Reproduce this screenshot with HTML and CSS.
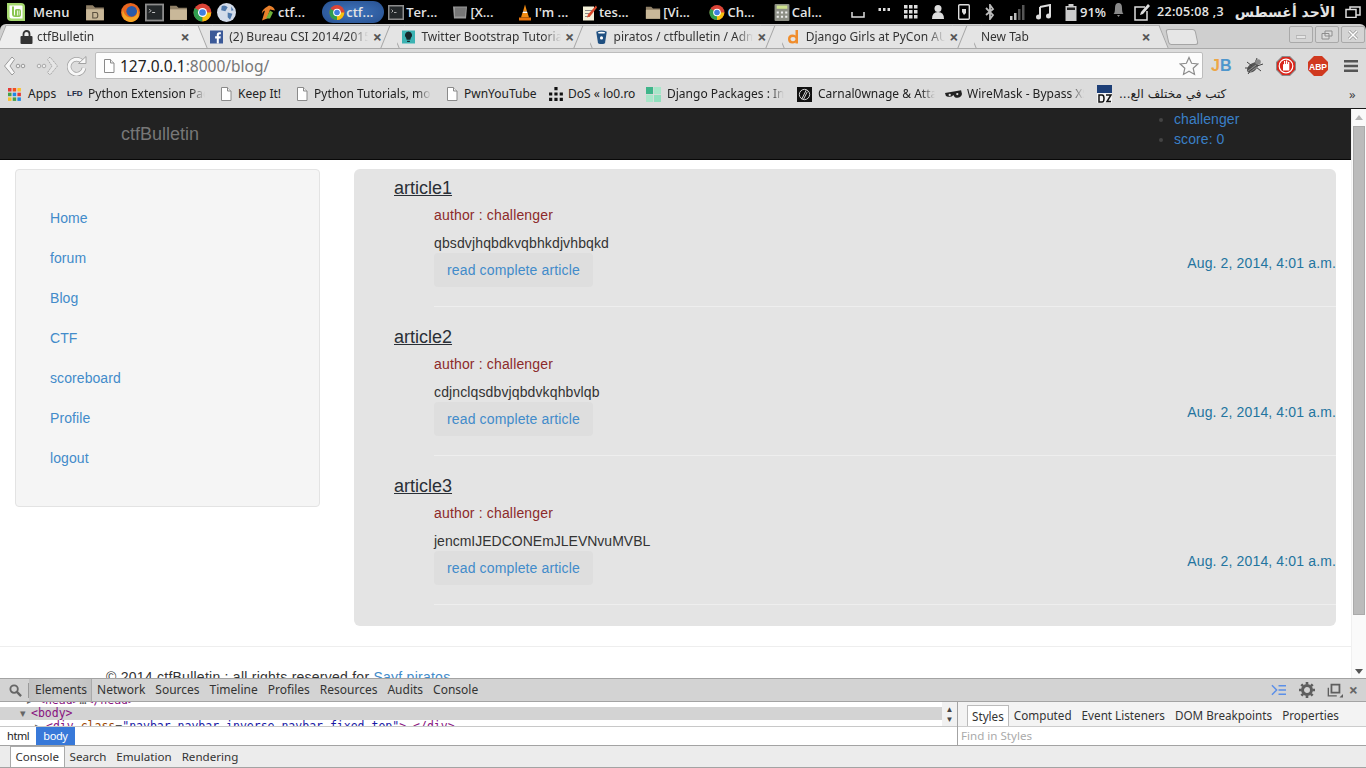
FILE: index.html
```html
<!DOCTYPE html>
<html lang="en">
<head>
<meta charset="utf-8">
<title>ctfBulletin</title>
<link rel="stylesheet" href="styles.css">
</head>
<body>
<svg class="defs" width="0" height="0">
  <defs>
    <symbol id="chrome" viewBox="0 0 16 16">
      <circle cx="8" cy="8" r="7.5" fill="#db4437"/>
      <path d="M8 8 1.500 4.200A7.500 7.500 0 0 0 8 15.500z" fill="#2f9e4f"/>
      <path d="M8 8h7.300A7.500 7.500 0 0 1 8 15.500z" fill="#f4c20d"/>
      <circle cx="8" cy="8" r="3.800" fill="#fff"/>
      <circle cx="8" cy="8" r="2.800" fill="#3f7fe0"/>
    </symbol>
    <symbol id="folder" viewBox="0 0 18 16">
      <path d="M1 1.500h6l2 2h8V15H1z" fill="#8f7f66"/>
      <path d="M1 5h16v10H1z" fill="#c9b899"/>
    </symbol>
    <symbol id="page" viewBox="0 0 12 14">
      <path d="M1.500.5h6l3.500 3.500v9.500H1.500z" fill="#fff" stroke="#8a8a8a"/>
      <path d="M7.500.5V4H11" fill="#eee" stroke="#8a8a8a"/>
    </symbol>
  </defs>
</svg>

<header class="panel">
  <div class="panel-start">
    <svg class="i-mint" viewBox="0 0 20 20"><path d="M1 1h14q4 0 4 4v14H5q-4 0-4-4z" fill="#a5d86f"/><path d="M3.500 3.500h12q1 0 1 1v12h-11q-2 0-2-2z" fill="#fff"/><path d="M6 4.500h2V12q0 1.500 1 1.500V8.500q0-1.500 1.500-1.500H13q2 0 2 2v4q0 2-3 2H9q-3 0-3-3zM11 8.500v5h.8V8.500zM12.800 8.500v5q.7 0 .7-1.500V8.500z" fill="#8cc653"/></svg>
    <span class="menu-label">Menu</span>
  </div>
  <div class="launchers">
    <svg class="lic lic-first" viewBox="0 0 18 16"><use href="#folder"/><path d="M7 8h3q1.500 0 1.500 2.500T10 13H7z" fill="none" stroke="#5c5140"/></svg>
    <svg class="lic" viewBox="0 0 16 16"><circle cx="8" cy="8" r="8" fill="#e8651f"/><circle cx="9" cy="7" r="4.500" fill="#2a5aa8"/><path d="M1.500 5q1 5 4 6.500 4 1.500 7-1 2-2 .5-6 3 4 1.500 8-3 4-7 3.500-6-1-6.500-6.500z" fill="#f4a524"/></svg>
    <svg class="lic" viewBox="0 0 16 16"><rect y=".5" width="16" height="15" fill="#8d8d8d"/><rect x="1.500" y="2" width="13" height="12" fill="#24282a"/><path d="M3.500 5l1.500 1.500L3.500 8M6 8h2.500" stroke="#ccc" fill="none" stroke-width=".8"/></svg>
    <svg class="lic" viewBox="0 0 18 16"><use href="#folder"/></svg>
    <svg class="lic"><use href="#chrome"/></svg>
    <svg class="lic" viewBox="0 0 16 16"><circle cx="8" cy="8" r="8" fill="#d3dcea"/><path d="M4 2.500q3-1 5 1L7 7 3.500 6zM9 8l4 1-2 5-2-2zM12 3l2 3-2 .5z" fill="#4f79ac"/></svg>
  </div>
  <div class="windows">
    <div class="win"><svg class="wic" viewBox="0 0 16 16"><path d="M9 1q5 1 6 5l-5-1-3 9-5 2 3-10q-3 1-3 4Q0 6 9 1z" fill="#e9802b"/><path d="M10 6l3 2-3 6H6z" fill="#6fb13a"/></svg><span>ctf...</span></div>
    <div class="win win-on"><svg class="wic"><use href="#chrome"/></svg><span>ctf...</span></div>
    <div class="win"><svg class="wic" viewBox="0 0 16 16"><rect y=".5" width="16" height="15" fill="#8d8d8d"/><rect x="1.500" y="2" width="13" height="12" fill="#24282a"/><path d="M3.500 5l1.500 1.500L3.500 8M6 8h2.500" stroke="#ccc" fill="none" stroke-width=".8"/></svg><span>Ter...</span></div>
    <div class="win"><svg class="wic" viewBox="0 0 16 16"><path d="M1 2h14l-1 12H2z" fill="#9a9a9a"/><path d="M3 3h11l-1 9H3z" fill="#777"/></svg><span>[X...</span></div>
    <div class="win"><svg class="wic" viewBox="0 0 16 16"><path d="M8 0l2 7H6zM5.500 8h5l1.500 5H4z" fill="#f08a12"/><path d="M6 7h4l.4 1.500H5.600z" fill="#fff"/><rect x="2" y="13" width="12" height="3" fill="#e8750d"/></svg><span>I'm ...</span></div>
    <div class="win"><svg class="wic" viewBox="0 0 16 16"><path d="M2 2h11v14H2z" fill="#f4f0d8"/><path d="M4 6h7M4 9h7M4 12h5" stroke="#888"/><path d="M15 1l1 2-7 9-3 1 1-3z" fill="#d9482b"/></svg><span>tes...</span></div>
    <div class="win"><svg class="wic" viewBox="0 0 18 16"><use href="#folder"/></svg><span>[Vi...</span></div>
    <div class="win"><svg class="wic"><use href="#chrome"/></svg><span>Ch...</span></div>
    <div class="win"><svg class="wic" viewBox="0 0 14 16"><rect width="14" height="16" rx="1" fill="#8e9086"/><rect x="2" y="1.500" width="10" height="3" fill="#cfe38f"/><path d="M2 7h2v2H2zM6 7h2v2H6zM10 7h2v2h-2zM2 11h2v2H2zM6 11h2v2H6zM10 11h2v2h-2z" fill="#eee"/></svg><span>Cal...</span></div>
  </div>
  <div class="tray">
    <svg class="t-kb" viewBox="0 0 14 8"><path d="M1 1v5h12V1" fill="none" stroke="#ddd" stroke-width="1.500"/></svg>
    <svg class="t-dots" viewBox="0 0 12 4"><path d="M0 0h2.500v3H0zM4.500 0H7v3H4.500zM9 0h2.500v3H9z" fill="#ddd"/></svg>
    <svg class="t-grid" viewBox="0 0 14 14"><path d="M0 0h3.500v3.500H0zM5 0h3.500v3.500H5zM10 0h3.500v3.500H10zM0 5h3.500v3.500H0zM5 5h3.500v3.500H5zM10 5h3.500v3.500H10zM0 10h3.500v3.500H0zM5 10h3.500v3.500H5zM10 10h3.500v3.500H10z" fill="#ddd"/></svg>
    <svg class="t-user" viewBox="0 0 12 14"><circle cx="6" cy="3.500" r="3.500" fill="#ddd"/><path d="M0 14q0-7 6-7t6 7z" fill="#ddd"/></svg>
    <svg class="t-phone" viewBox="0 0 12 16"><rect x=".7" y=".7" width="10.600" height="14.600" rx="1" fill="none" stroke="#ddd" stroke-width="1.400"/><path d="M4 5h4v4l-2 2-2-3z" fill="#ddd"/></svg>
    <svg class="t-bt" viewBox="0 0 10 16"><path d="M1 4l7 7-3 4V1l3 4-7 6" fill="none" stroke="#bbb" stroke-width="1.800"/></svg>
    <svg class="t-sig" viewBox="0 0 15 15"><path d="M0 11h2.500v4H0z" fill="#ccc"/><path d="M4 8h2.500v7H4z" fill="#bbb"/><path d="M8 4h2.500v11H8zM12 0h2.500v15H12z" fill="#555"/></svg>
    <svg class="t-music" viewBox="0 0 16 16"><path d="M4 3l10-2v11" fill="none" stroke="#ddd" stroke-width="2"/><path d="M4 3v10" stroke="#ddd" stroke-width="2"/><circle cx="2.500" cy="13" r="2.500" fill="#ddd"/><circle cx="12.500" cy="12" r="2.500" fill="#ddd"/></svg>
    <svg class="t-bat" viewBox="0 0 11 17"><path d="M3 0h5v2h3v15H0V2h3z" fill="#ccc"/><path d="M1.500 3.500h8V6h-8z" fill="#222"/></svg>
    <span class="t-pct">91%</span>
    <svg class="t-bell" viewBox="0 0 10 14"><path d="M5 0q3.500 0 3.500 5t1.500 6H0q1.500-1 1.500-6T5 0zM3.500 12h3L5 14z" fill="#8a8a8a"/></svg>
    <svg class="t-note" viewBox="0 0 18 17"><path d="M12 3H2v13h12V7" fill="none" stroke="#ddd" stroke-width="1.500"/><path d="M15 0l2 2-7 8-3 1 1-3z" fill="#ddd"/></svg>
    <span class="t-clock">22:05:08 ,3</span>
    <span class="t-date" dir="rtl" lang="ar">الأحد أغسطس</span>
    <svg class="t-win" viewBox="0 0 16 12"><path d="M5 1h10v8H5z" fill="none" stroke="#ddd" stroke-width="1.500"/><path d="M1 3.500h10v8H1z" fill="#000" stroke="#ddd" stroke-width="1.500"/></svg>
  </div>
</header>

<div class="tabstrip">
  <div class="tab tab-on"><svg class="fav" viewBox="0 0 12 14"><path d="M3 6V4a3 3 0 0 1 6 0v2" fill="none" stroke="#333" stroke-width="1.800"/><rect y="6" width="12" height="8" rx="1" fill="#333"/></svg><span class="tab-title">ctfBulletin</span><span class="tab-x">×</span></div>
  <div class="tab"><svg class="fav" viewBox="0 0 14 14"><rect width="14" height="14" fill="#3b5998"/><path d="M9.500 14V8.500h1.800l.3-2.200H9.500V5q0-1 1-1h1.200V2H10Q7.300 2 7.300 4.700v1.600H5.500v2.200h1.800V14z" fill="#fff"/></svg><span class="tab-title">(2) Bureau CSI 2014/2015</span><span class="tab-x">×</span></div>
  <div class="tab"><svg class="fav" viewBox="0 0 14 14"><rect width="14" height="14" fill="#3cb3b3"/><path d="M7 1a4 4 0 0 1 2.500 7L9 10H5l-.5-2A4 4 0 0 1 7 1zM5.500 11h3v1.500h-3z" fill="#15282c"/></svg><span class="tab-title">Twitter Bootstrap Tutorial</span><span class="tab-x">×</span></div>
  <div class="tab"><svg class="fav" viewBox="0 0 14 16"><path d="M1 2q6-3 12 0l-2 13q-4 2-8 0z" fill="#205081"/><ellipse cx="7" cy="3" rx="4" ry="1" fill="#fff"/><circle cx="7" cy="9" r="1.800" fill="#fff"/></svg><span class="tab-title">piratos / ctfbulletin / Admin</span><span class="tab-x">×</span></div>
  <div class="tab"><svg class="fav" viewBox="0 0 12 14"><path d="M8 0h2.500v13.500H8v-1q-1 1-3 1-4.500 0-4.500-4.500T5 4.500q2 0 3 1zM5.500 7C3.800 7 3 7.800 3 9s.8 2.200 2.500 2.200S8 10.200 8 9 7.200 7 5.500 7z" fill="#f08d2c"/></svg><span class="tab-title">Django Girls at PyCon AU</span><span class="tab-x">×</span></div>
  <div class="tab tab-new"><span class="tab-title">New Tab</span><span class="tab-x">×</span></div>
  <div class="newtab"></div>
  <div class="winbtns">
    <span class="wb"><svg viewBox="0 0 12 10"><path d="M1 7h10" stroke="#999" stroke-width="3"/><path d="M1.500 7h9" stroke="#fff" stroke-width="1.500"/></svg></span>
    <span class="wb"><svg viewBox="0 0 12 10"><path d="M4 1h7v5H4zM1 3.500h7V9H1z" fill="#ddd" stroke="#8d8d8d"/></svg></span>
    <span class="wb"><svg viewBox="0 0 12 10"><path d="M2 1l8 8M10 1L2 9" stroke="#999" stroke-width="3"/><path d="M2 1l8 8M10 1L2 9" stroke="#fff" stroke-width="1.500"/></svg></span>
  </div>
</div>

<div class="toolbar">
  <div class="navbtns">
    <svg class="nb" viewBox="0 0 22 20"><path d="M8 1l2.500 2.500L6 10l4.500 6.500L8 19 .5 10z" fill="#f7f7f7" stroke="#9a9a9a"/><circle cx="14" cy="10" r="1.800" fill="#eee" stroke="#999"/><circle cx="19" cy="10" r="1.800" fill="#eee" stroke="#999"/></svg>
    <svg class="nb" viewBox="0 0 22 20"><path d="M14 1l-2.500 2.500L16 10l-4.500 6.500L14 19l7.500-9z" fill="#e6e6e6" stroke="#a5a5a5" stroke-dasharray="1.500 .7"/><circle cx="8" cy="10" r="1.800" fill="#eee" stroke="#aaa"/><circle cx="3" cy="10" r="1.800" fill="#eee" stroke="#aaa"/></svg>
    <svg class="nb nb-r" viewBox="0 0 20 20"><path d="M15.500 6A7.500 7.500 0 1 0 17 12" fill="none" stroke="#a2a2a2" stroke-width="4.500"/><path d="M15.500 6A7.500 7.500 0 1 0 17 12" fill="none" stroke="#f7f7f7" stroke-width="3"/><path d="M11.500 7.500h7.500V.5z" fill="#f7f7f7" stroke="#a2a2a2"/></svg>
  </div>
  <div class="omni">
    <svg class="omni-page" viewBox="0 0 12 14"><use href="#page"/></svg>
    <span class="url"><b>127.0.0.1</b>:8000/blog/</span>
    <svg class="star" viewBox="0 0 20 20"><path d="M10 1.500l2.600 5.800 6.200.7-4.600 4.200 1.300 6.200-5.500-3.200-5.500 3.200 1.300-6.200L1.200 8l6.200-.7z" fill="#fafafa" stroke="#8c8c8c" stroke-width="1.200"/></svg>
  </div>
  <div class="exts">
    <span class="jb"><i>J</i><u>B</u></span>
    <svg class="ext" viewBox="0 0 20 20"><ellipse cx="8.500" cy="11.500" rx="3.800" ry="6.500" transform="rotate(50 8.500 11.500)" fill="#555"/><path d="M3 6l5 4M1 12h6M4 18l4-5M13 2l-2 5M19 8l-6 2M17 15l-5-4" stroke="#444"/><circle cx="14" cy="6" r="2.800" fill="#888"/><path d="M4 15l8-6M6 16l7-5" stroke="#bbb" stroke-width=".6"/></svg>
    <svg class="ext" viewBox="0 0 20 20"><path d="M6 0h8l6 6v8l-6 6H6l-6-6V6z" fill="#8a8a8a"/><path d="M6.500 1h7L19 6.500v7L13.500 19h-7L1 13.500v-7z" fill="#d9261c"/><circle cx="10" cy="10" r="6.800" fill="none" stroke="#fff" stroke-width="1.200"/><path d="M7 14.500V8l1 .5V5l1.200 0v3h.8V4.500l1.300 0V8H12V6l1.300 0v8.500z" fill="#fff"/></svg>
    <svg class="ext" viewBox="0 0 20 20"><path d="M6 0h8l6 6v8l-6 6H6l-6-6V6z" fill="#d0391f"/><text x="10" y="13.500" class="abp">ABP</text></svg>
    <svg class="burger" viewBox="0 0 14 12"><path d="M0 0h14v2.500H0zM0 4.700h14v2.500H0zM0 9.500h14V12H0z" fill="#555"/></svg>
  </div>
</div>

<nav class="bookmarks">
  <div class="bm bm-apps"><svg class="bi" viewBox="0 0 13 13"><path d="M0 0h3.500v3.500H0z" fill="#e53935"/><path d="M4.700 0h3.500v3.500H4.700z" fill="#f4511e"/><path d="M9.400 0h3.500v3.500H9.400z" fill="#fbc02d"/><path d="M0 4.700h3.500v3.500H0z" fill="#43a047"/><path d="M4.700 4.700h3.500v3.500H4.700z" fill="#1e88e5"/><path d="M9.400 4.700h3.500v3.500H9.400z" fill="#e53935"/><path d="M0 9.400h3.500v3.500H0z" fill="#fbc02d"/><path d="M4.700 9.400h3.500v3.500H4.700z" fill="#43a047"/><path d="M9.400 9.400h3.500v3.500H9.400z" fill="#1e88e5"/></svg><span>Apps</span></div>
  <div class="bm bm-lfd"><span class="lfd">LFD</span><span class="bt bt-117">Python Extension Packages</span></div>
  <div class="bm bm-keep"><svg class="bi bi-p"><use href="#page"/></svg><span>Keep It!</span></div>
  <div class="bm bm-tut"><svg class="bi bi-p"><use href="#page"/></svg><span class="bt bt-117">Python Tutorials, more</span></div>
  <div class="bm bm-pwn"><svg class="bi bi-p"><use href="#page"/></svg><span>PwnYouTube</span></div>
  <div class="bm bm-dos"><svg class="bi bi-w" viewBox="0 0 16 14"><path d="M6 0h3v3H6zM1 5h3v3H1zM6 5h3v3H6zM11 5h3v3h-3zM1 10h3v3H1zM6 10h3v3H6zM11 10h3v3h-3z" fill="#111"/></svg><span>DoS « lo0.ro</span></div>
  <div class="bm bm-dj"><svg class="bi bi-w" viewBox="0 0 17 17"><path d="M0 0h8v8H0z" fill="#3fb58a"/><path d="M9 0h8v8H9z" fill="#a8e6c9"/><path d="M0 9h8v8H0z" fill="#a8e6c9"/><path d="M9 9h8v8H9z" fill="#8fdfbc"/></svg><span class="bt bt-117">Django Packages : Intro</span></div>
  <div class="bm bm-car"><svg class="bi bi-w" viewBox="0 0 16 16"><rect width="16" height="16" fill="#111"/><circle cx="8" cy="8" r="5.500" fill="none" stroke="#ddd"/><path d="M5 13L10 3M7 13l4-8" stroke="#ddd"/></svg><span class="bt bt-117">Carnal0wnage &amp; Attack</span></div>
  <div class="bm bm-mask"><svg class="bi bi-w" viewBox="0 0 18 9"><path d="M0 3l17-3 1 4q-1 4-5 4-3 0-4-3-2 2-4 2T1 6z" fill="#222"/><circle cx="5" cy="5" r="1.200" fill="#ddd"/><circle cx="13" cy="4" r="1.200" fill="#ddd"/></svg><span class="bt bt-117">WireMask - Bypass XSS</span></div>
  <div class="bm bm-dz"><svg class="bi bi-dz" viewBox="0 0 15 18"><rect width="15" height="18" fill="#f4f4f4"/><rect width="15" height="8" fill="#1d3f77"/><path d="M2 10h3q2 0 2 3.500T5 17H2zM9 10h5l-4 6.500h4" fill="none" stroke="#111" stroke-width="1.500"/></svg><span class="ar" dir="rtl" lang="ar">كتب في مختلف الع...</span></div>
  <span class="more">»</span>
</nav>

<div class="viewport">
  <div class="page">
    <div class="site-nav">
      <a class="brand" href="#">ctfBulletin</a>
      <ul class="user">
        <li><a href="#">challenger</a></li>
        <li><a href="#">score: 0</a></li>
      </ul>
    </div>
    <div class="columns">
      <aside class="well">
        <a href="#">Home</a>
        <a href="#">forum</a>
        <a href="#">Blog</a>
        <a href="#">CTF</a>
        <a href="#">scoreboard</a>
        <a href="#">Profile</a>
        <a href="#">logout</a>
      </aside>
      <main class="posts">
        <article class="post">
          <h3><a href="#">article1</a></h3>
          <p class="author">author : challenger</p>
          <p class="body body-lower">qbsdvjhqbdkvqbhkdjvhbqkd</p>
          <div class="post-foot"><a class="btn" href="#">read complete article</a><span class="date">Aug. 2, 2014, 4:01 a.m.</span></div>
          <hr class="rule">
        </article>
        <article class="post">
          <h3><a href="#">article2</a></h3>
          <p class="author">author : challenger</p>
          <p class="body body-lower">cdjnclqsdbvjqbdvkqhbvlqb</p>
          <div class="post-foot"><a class="btn" href="#">read complete article</a><span class="date">Aug. 2, 2014, 4:01 a.m.</span></div>
          <hr class="rule">
        </article>
        <article class="post">
          <h3><a href="#">article3</a></h3>
          <p class="author">author : challenger</p>
          <p class="body">jencmIJEDCONEmJLEVNvuMVBL</p>
          <div class="post-foot"><a class="btn" href="#">read complete article</a><span class="date">Aug. 2, 2014, 4:01 a.m.</span></div>
          <hr class="rule">
        </article>
      </main>
    </div>
    <footer class="foot"><p>© 2014 ctfBulletin : all rights reserved for <a href="#">Sayf piratos</a></p></footer>
  </div>
  <div class="scrollbar">
    <span class="arrow up"></span>
    <span class="thumb"></span>
    <span class="arrow down"></span>
  </div>
</div>

<section class="devtools">
  <div class="dt-bar">
    <svg class="dt-search" viewBox="0 0 14 14"><circle cx="5.500" cy="5.500" r="4" fill="none" stroke="#666" stroke-width="2"/><path d="M8.500 8.500l4.500 4.500" stroke="#666" stroke-width="2.500"/></svg>
    <span class="dt-sep"></span>
    <span class="dt-tab dt-tab-on">Elements</span>
    <span class="dt-tab">Network</span>
    <span class="dt-tab">Sources</span>
    <span class="dt-tab">Timeline</span>
    <span class="dt-tab">Profiles</span>
    <span class="dt-tab">Resources</span>
    <span class="dt-tab">Audits</span>
    <span class="dt-tab">Console</span>
    <span class="dt-tools">
      <svg class="dt-drawer" viewBox="0 0 16 12"><path d="M1 1l5 5-5 5" fill="none" stroke="#5b8fe8" stroke-width="1.600"/><path d="M8 1.500h8M8 6h8M8 10.500h8" stroke="#5b8fe8" stroke-width="1.600"/></svg>
      <svg class="dt-gear" viewBox="0 0 16 16"><circle cx="8" cy="8" r="4.500" fill="none" stroke="#5e5e5e" stroke-width="3"/><path d="M8 0v16M0 8h16M2.300 2.300l11.400 11.400M13.700 2.300L2.300 13.700" stroke="#5e5e5e" stroke-width="2.600" stroke-dasharray="2.500 11 2.500"/></svg>
      <svg class="dt-dock" viewBox="0 0 18 16"><path d="M5 1.500h9v9H5z" fill="none" stroke="#5e5e5e" stroke-width="2"/><path d="M1.500 5v9H11" fill="none" stroke="#5e5e5e" stroke-width="1.500"/><path d="M18 16h-4l4-4z" fill="#5e5e5e"/></svg>
      <span class="dt-x">×</span>
    </span>
  </div>
  <div class="dt-main">
    <div class="dt-left">
      <div class="tree">
        <div class="tree-in">
          <div class="line l0"><span class="tw">▸</span><span class="tg">&lt;head&gt;</span>…<span class="tg">&lt;/head&gt;</span></div>
          <div class="line l1 sel"><span class="tw">▾</span><span class="tg">&lt;body&gt;</span></div>
          <div class="line l2"><span class="tw">▸</span><span class="tg">&lt;div</span> <span class="an">class</span>=<span class="av">"navbar navbar-inverse navbar-fixed-top"</span><span class="tg">&gt;</span>…<span class="tg">&lt;/div&gt;</span></div>
        </div>
        <div class="tree-scroll"><i class="sa">▲</i><i class="sa">▼</i></div>
      </div>
      <div class="crumbs"><span class="crumb">html</span><span class="crumb crumb-on">body</span></div>
    </div>
    <div class="dt-right">
      <div class="side-tabs">
        <span class="st st-on">Styles</span>
        <span class="st">Computed</span>
        <span class="st">Event Listeners</span>
        <span class="st">DOM Breakpoints</span>
        <span class="st">Properties</span>
      </div>
      <div class="find">Find in Styles</div>
    </div>
  </div>
  <div class="drawer">
    <span class="dr dr-on">Console</span>
    <span class="dr">Search</span>
    <span class="dr">Emulation</span>
    <span class="dr">Rendering</span>
  </div>
</section>
</body>
</html>
```
FILE: styles.css
```css
* { box-sizing: border-box; }
html, body { margin: 0; padding: 0; height: 768px; overflow: hidden; }
body {
  width: 1366px;
  display: flex;
  flex-direction: column;
  font-family: "Liberation Sans", Arial, sans-serif;
  font-size: 14px;
  line-height: 20px;
  color: #333;
  background: #000;
}
.defs { position: absolute; }
svg { display: block; flex: none; }

/* Desktop panel */
.panel {
  height: 24px;
  flex: none;
  display: flex;
  align-items: center;
  background: #000;
  color: #e4e4e4;
  font-family: "Open Sans", sans-serif;
  font-size: 13px;
  font-weight: 600;
  white-space: nowrap;
}
.panel-start { display: flex; align-items: center; width: 85px; padding-left: 6px; }
.i-mint { width: 20px; height: 20px; }
.menu-label { margin-left: 7px; letter-spacing: .2px; }
.launchers { display: flex; align-items: center; width: 175px; }
.lic { width: 19px; height: 19px; margin-right: 5px; }
.lic-first { width: 20px; margin-right: 16px; }
.windows { display: flex; align-items: center; width: 578px; margin-left: -1px; }
.win {
  width: 64.4px;
  height: 22px;
  padding-left: 1px;
  display: flex;
  align-items: center;
  gap: 2px;
  border-radius: 11px;
  font-size: 13px;
}
.win-on {
  background: radial-gradient(ellipse at center, #3f74bd, #27508f);
  padding-left: 7px;
  width: 62px;
  margin: 0 3px 0 -1px;
  gap: 1px;
}
.wic { width: 16px; height: 17px; }
.tray { display: flex; align-items: center; flex: 1; }
.t-kb { width: 14px; height: 8px; margin: 6px 0 0 14px; }
.t-dots { width: 13px; height: 4px; margin: 0 0 4px 13px; }
.t-grid { width: 14px; height: 14px; margin-left: 13px; }
.t-user { width: 12px; height: 14px; margin-left: 14px; }
.t-phone { width: 12px; height: 16px; margin-left: 14px; }
.t-bt { width: 10px; height: 16px; margin-left: 15px; }
.t-sig { width: 15px; height: 15px; margin-left: 15px; }
.t-music { width: 16px; height: 16px; margin-left: 11px; }
.t-bat { width: 12px; height: 17px; margin-left: 13px; }
.t-pct { margin-left: 3px; font-size: 13px; width: 33px; }
.t-bell { width: 11px; height: 14px; margin: 0 0 4px 0; }
.t-note { width: 18px; height: 17px; margin-left: 9px; }
.t-clock { margin-left: 6px; width: 72px; font-size: 12.500px; letter-spacing: .3px; }
.t-date { width: 99px; margin-left: 7px; font-family: "DejaVu Sans", sans-serif; font-size: 14px; font-weight: 700; text-align: center; }
.t-win { width: 16px; height: 12px; margin-left: 10px; }

/* Browser tabs */
.tabstrip {
  height: 24px;
  flex: none;
  display: flex;
  align-items: flex-end;
  padding-left: 6px;
  background: #cfcfcf;
  border-radius: 6px 6px 0 0;
  font-family: "Noto Sans", sans-serif;
  font-size: 12px;
  color: #333;
}
.tab {
  position: relative;
  flex: none;
  width: 192.2px;
  height: 23px;
  display: flex;
  align-items: center;
  padding: 0 8px 0 12px;
  background: #e4e4e4;
  border-top: 1px solid #b5b5b5;
  white-space: nowrap;
}
.tab::before, .tab::after {
  content: "";
  position: absolute;
  top: -1px;
  bottom: 0;
  width: 14px;
  background: inherit;
  border-top: 1px solid #b5b5b5;
  z-index: 1;
}
.tab::before { left: -5px; transform: skewX(-22deg); border-left: 1px solid #a5a5a5; }
.tab::after { right: -5px; transform: skewX(22deg); border-right: 1px solid #a5a5a5; }
.tab-on { background: #eeeeee; z-index: 2; padding-left: 14px; }
.tab-new { padding-left: 14px; }
.fav { position: relative; z-index: 3; width: 13px; height: 14px; margin-right: 6px; }
.tab-on .fav { margin-right: 4px; }
.tab-title {
  position: relative;
  z-index: 3;
  flex: 1;
  overflow: hidden;
  margin-right: 4px;
  -webkit-mask-image: linear-gradient(to right, #000 88%, transparent);
  mask-image: linear-gradient(to right, #000 88%, transparent);
}
.tab-x { position: relative; z-index: 3; width: 10px; font-size: 16px; line-height: 16px; color: #555; font-weight: 700; text-align: center; }
.newtab {
  flex: none;
  width: 30px;
  height: 16px;
  margin: 0 0 3px 8px;
  background: #e6e6e6;
  border: 1px solid #a5a5a5;
  border-radius: 3px;
  transform: skewX(12deg);
}
.winbtns { display: flex; align-self: flex-start; gap: 2px; margin: 2px 0 0 92px; }
.wb {
  width: 24px;
  height: 17px;
  display: flex;
  align-items: center;
  justify-content: center;
  background: #d4d4d4;
  border: 1px solid #a9a9a9;
  border-radius: 2px;
}
.wb svg { width: 12px; height: 10px; }

/* Toolbar */
.toolbar {
  height: 34px;
  flex: none;
  display: flex;
  align-items: center;
  background: #dcdcdc;
  border-top: 1px solid #a9a9a9;
}
.navbtns { display: flex; align-items: center; width: 95px; padding-left: 4px; gap: 10px; }
.nb { width: 22px; height: 20px; }
.nb-r { width: 20px; margin-left: -1px; }
.omni {
  width: 1108px;
  height: 27px;
  display: flex;
  align-items: center;
  background: #fcfcfc;
  border: 1px solid #bdbdbd;
  border-radius: 2px;
  padding: 0 3px 0 7px;
}
.omni-page { width: 12px; height: 14px; }
.url { flex: 1; margin-left: 5px; font-family: "Noto Sans", sans-serif; font-size: 15.500px; line-height: 20px; color: #777; }
.url b { font-weight: 400; color: #222; }
.star { width: 20px; height: 20px; }
.exts { display: flex; align-items: center; flex: 1; padding-left: 8px; }
.jb { display: flex; width: 21px; font-family: "Liberation Sans", sans-serif; font-size: 16px; font-weight: 700; line-height: 20px; }
.jb i { font-style: normal; color: #eda646; }
.jb u { text-decoration: none; color: #4f96cc; }
.ext { width: 20px; height: 20px; margin-left: 12px; }
.abp { font: 700 8.500px "Liberation Sans", sans-serif; fill: #fff; text-anchor: middle; }
.burger { width: 14px; height: 12px; margin-left: 16px; }

/* Bookmarks */
.bookmarks {
  height: 26px;
  flex: none;
  display: flex;
  align-items: center;
  padding-bottom: 2px;
  background: #dcdcdc;
  font-family: "Noto Sans", sans-serif;
  font-size: 12px;
  color: #222;
  white-space: nowrap;
}
.bm { display: flex; align-items: center; flex: none; overflow: hidden; }
.bi { width: 13px; height: 13px; }
.bi-p { width: 12px; height: 14px; }
.bi-w { width: 17px; height: 15px; }
.bi-dz { width: 15px; height: 18px; }
.bt { display: block; overflow: hidden; -webkit-mask-image: linear-gradient(to right, #000 88%, transparent); mask-image: linear-gradient(to right, #000 88%, transparent); }
.bt-117 { width: 117px; }
.bm-apps { width: 67px; padding-left: 8px; gap: 7px; }
.lfd { width: 21px; font-family: "Liberation Sans", sans-serif; font-size: 8px; font-weight: 700; color: #1d2a44; }
.bm-lfd { width: 153px; }
.bm-keep { width: 76px; gap: 6px; }
.bm-tut { width: 150px; gap: 6px; }
.bm-pwn { width: 102px; gap: 6px; }
.bm-dos { width: 97px; gap: 3px; }
.bm-dj { width: 151px; gap: 5px; }
.bm-car { width: 149px; gap: 5px; }
.bm-mask { width: 152px; gap: 5px; }
.bm-dz { width: 252px; gap: 7px; }
.ar { font-family: "DejaVu Sans", sans-serif; font-size: 12px; }
.more { font-size: 13px; color: #444; }

/* The page */
.viewport {
  height: 570px;
  flex: none;
  display: flex;
  overflow: hidden;
  background: #fff;
  border-top: 1px solid #1a1a1a;
}
.page { width: 1351px; flex: none; }
a { color: #428bca; text-decoration: none; }
.site-nav {
  height: 51px;
  display: flex;
  justify-content: space-between;
  background: #222;
  border-bottom: 1px solid #080808;
}
.brand { margin: 15px 0 0 121px; font-size: 18px; line-height: 20px; color: #777; }
.user { margin: 0; padding: 0 112px 0 0; width: 192px; list-style: disc; color: #444; letter-spacing: .08px; }
.user a { color: #3a80c8; }
.user li { margin-left: 15px; }
.columns { display: flex; margin-top: 9px; align-items: flex-start; }
.well {
  width: 305px;
  height: 338px;
  margin-left: 15px;
  padding: 38px 34px;
  display: flex;
  flex-direction: column;
  gap: 20px;
  background: #f5f5f5;
  border: 1px solid #e3e3e3;
  border-radius: 4px;
  letter-spacing: .08px;
}
.posts {
  width: 982px;
  height: 457px;
  margin-left: 34px;
  background: #e4e4e4;
  border-radius: 6px;
}
.post { padding-top: 9px; height: 149px; }
.post h3 { margin: 0 0 0 40px; font-size: 18px; line-height: 20px; font-weight: 500; }
.post h3 a { color: #2a2f36; text-decoration: underline; }
.author { margin: 7px 0 0 80px; color: #8c2a2a; letter-spacing: .16px; }
.body { margin: 8px 0 0 80px; }
.body-lower { letter-spacing: .125px; }
.post-foot { margin-left: 80px; display: flex; justify-content: space-between; align-items: flex-start; }
.btn { height: 34px; padding: 7px 13px; background: #dedede; border-radius: 4px; letter-spacing: .14px; }
.date { color: #23749f; white-space: nowrap; letter-spacing: .14px; }
.rule { margin: 19px 0 0 80px; border: 0; border-top: 1px solid #eee; }
.foot { margin-top: 20px; border-top: 1px solid #eee; padding: 20px 0 0 106px; }
.foot p { margin: 0; letter-spacing: .25px; }
.scrollbar { width: 15px; flex: none; display: flex; flex-direction: column; align-items: center; background: #fafafa; border-left: 1px solid #f0f0f0; }
.arrow { width: 0; height: 0; border-left: 4px solid transparent; border-right: 4px solid transparent; }
.arrow.up { margin-top: 6px; border-bottom: 5px solid #b5b5b5; }
.arrow.down { margin-bottom: 4px; border-top: 5px solid #555; }
.thumb { width: 12px; flex: none; height: 489px; margin: 6px 0 auto; background: #bbb; border: 1px solid #aaa; }

/* Developer tools */
.devtools {
  flex: 1;
  display: flex;
  flex-direction: column;
  font-family: "Noto Sans", sans-serif;
  font-size: 12px;
  color: #333;
  background: #fff;
  border-top: 1px solid #a3a3a3;
  overflow: hidden;
}
.dt-bar {
  height: 23px;
  flex: none;
  display: flex;
  align-items: center;
  background: #d3d3d3;
  border-bottom: 1px solid #a3a3a3;
  padding-left: 9px;
}
.dt-search { width: 13px; height: 13px; }
.dt-sep { width: 1px; height: 15px; margin-left: 6px; background: #9a9a9a; }
.dt-tab { padding: 0 5px; line-height: 22px; }
.dt-tab-on { padding: 0 4px 0 6px; background: linear-gradient(to right, #c2c2c2, #cfcfcf 50%, #c2c2c2); border-right: 1px solid #aaa; }
.dt-tools { display: flex; align-items: center; margin-left: auto; padding-right: 8px; }
.dt-drawer { width: 15px; height: 12px; }
.dt-gear { width: 16px; height: 16px; margin-left: 13px; }
.dt-dock { width: 16px; height: 15px; margin-left: 12px; }
.dt-x { margin-left: 6px; font-size: 16px; color: #666; font-weight: 700; }
.dt-main { height: 44px; flex: none; display: flex; border-bottom: 1px solid #a3a3a3; }
.dt-left { width: 957px; flex: none; display: flex; flex-direction: column; }
.dt-right { flex: 1; border-left: 1px solid #a3a3a3; display: flex; flex-direction: column; }
.tree { height: 25px; flex: none; display: flex; overflow: hidden; border-bottom: 1px solid #c8c8c8; background: #fff; }
.tree-in { flex: 1; margin-top: -8px; font-family: "DejaVu Sans Mono", "Liberation Mono", monospace; font-size: 11.500px; }
.line { height: 13px; line-height: 13px; white-space: nowrap; color: #555; }
.l0 { padding-left: 38px; }
.l1 { padding-left: 31px; }
.l2 { padding-left: 46px; }
.sel { background: #d3d3d3; }
.tw { display: inline-block; width: 11px; margin-left: -11px; color: #666; font-family: "DejaVu Sans", sans-serif; font-size: 11px; }
.tg { color: #881280; }
.an { color: #994500; }
.av { color: #1a1aa6; }
.tree-scroll { width: 15px; flex: none; background: #f1f1f1; display: flex; flex-direction: column; align-items: center; justify-content: center; }
.sa { font-style: normal; font-size: 8px; line-height: 10px; color: #444; }
.crumbs { flex: 1; display: flex; font-size: 11px; letter-spacing: -.4px; }
.crumb { padding: 0 7px; line-height: 17px; color: #222; }
.crumb-on { background: #3879d9; color: #fff; }
.side-tabs { height: 25px; flex: none; display: flex; align-items: flex-end; padding-left: 9px; background: #f3f3f3; border-bottom: 1px solid #ccc; font-size: 11.700px; }
.st { padding: 0 5px; line-height: 20px; height: 21px; }
.st-on { background: #fff; border: 1px solid #bbb; border-bottom: 0; padding: 0 4px; }
.find { flex: 1; padding-left: 3px; line-height: 18px; color: #aaa; font-size: 11.600px; }
.drawer { flex: 1; display: flex; align-items: flex-end; padding-left: 10px; background: #ececec; border-bottom: 1px solid #a3a3a3; font-size: 11.600px; }
.dr { padding: 0 5px; line-height: 22px; height: 21px; }
.dr-on { background: #fff; border: 1px solid #aaa; border-bottom: 0; padding: 0 4.500px; line-height: 20px; }
```
